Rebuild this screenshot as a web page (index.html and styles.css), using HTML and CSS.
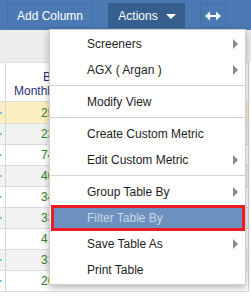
FILE: index.html
```html
<!DOCTYPE html>
<html lang="en">
<head>
    <meta charset="UTF-8">
    <meta name="viewport" content="width=device-width, initial-scale=1.0">
    <title>Screener</title>
    <link rel="stylesheet" href="styles.css">
</head>
<body>
    <div class="toolbar">
        <button class="btn btn-add">Add Column</button>
        <button class="btn btn-actions">Actions <span class="caret"></span></button>
        <button class="btn btn-icon">
            <svg width="16" height="10" viewBox="0 0 16 10">
                <path d="M4 4h8v2H4z" fill="#fff"/>
                <path d="M0 5l5-4.5v9z" fill="#fff"/>
                <path d="M16 5l-5-4.5v9z" fill="#fff"/>
            </svg>
        </button>
    </div>

    <div class="strip"></div>

    <table class="grid">
        <tr class="head">
            <td class="c0"></td>
            <td class="c1"><span class="l1">Be</span><span class="l2">Monthl</span></td>
            <td class="c2"></td>
            <td class="c3"></td>
            <td class="c4"></td>
        </tr>
        <tr class="hover"><td class="c0"><i class="dot"></i></td><td class="c1 up">25</td><td class="c2"></td><td class="c3"></td><td class="c4"></td></tr>
        <tr class="odd"><td class="c0"><i class="dot"></i></td><td class="c1 up">23</td><td class="c2"></td><td class="c3"></td><td class="c4"></td></tr>
        <tr><td class="c0"><i class="dot"></i></td><td class="c1 up">74</td><td class="c2"></td><td class="c3"></td><td class="c4"></td></tr>
        <tr class="odd"><td class="c0"><i class="dot"></i></td><td class="c1 up">40</td><td class="c2"></td><td class="c3"></td><td class="c4"></td></tr>
        <tr><td class="c0"><i class="dot"></i></td><td class="c1 up">34</td><td class="c2"></td><td class="c3"></td><td class="c4"></td></tr>
        <tr class="odd"><td class="c0"><i class="dot"></i></td><td class="c1 up">33</td><td class="c2"></td><td class="c3"></td><td class="c4"></td></tr>
        <tr><td class="c0"></td><td class="c1 up">41</td><td class="c2"></td><td class="c3"></td><td class="c4"></td></tr>
        <tr class="odd"><td class="c0"><i class="dot"></i></td><td class="c1 up">31</td><td class="c2"></td><td class="c3"></td><td class="c4"></td></tr>
        <tr class="last"><td class="c0"><i class="dot"></i></td><td class="c1 up">26.3%</td><td class="c2 down">35.6%</td><td class="c3">16.4%</td><td class="c4"></td></tr>
    </table>

    <ul class="menu">
        <li class="item">Screeners <span class="arrow"></span></li>
        <li class="item">AGX ( Argan ) <span class="arrow"></span></li>
        <li class="divider"></li>
        <li class="item">Modify View</li>
        <li class="divider"></li>
        <li class="item">Create Custom Metric</li>
        <li class="item">Edit Custom Metric <span class="arrow"></span></li>
        <li class="divider"></li>
        <li class="item">Group Table By <span class="arrow"></span></li>
        <li class="item active">Filter Table By</li>
        <li class="item">Save Table As <span class="arrow"></span></li>
        <li class="item">Print Table</li>
    </ul>
</body>
</html>
```

FILE: styles.css
```css
body {
    margin: 0;
    background: #fff;
    font-family: 'Liberation Sans', Arial, sans-serif;
    font-size: 12px;
    width: 251px;
    height: 297px;
    overflow: hidden;
    position: relative;
}

.toolbar {
    background-color: #4a79b3;
    height: 30px;
    display: flex;
    align-items: flex-start;
    padding: 3px 0 0 7px;
    box-sizing: border-box;
    gap: 15px;
}

.btn {
    height: 25px;
    border: 1px solid #4271aa;
    background-color: #4a79b3;
    color: white;
    font-family: 'Liberation Sans', Arial, sans-serif;
    font-size: 12px;
    padding: 0;
    display: flex;
    align-items: center;
    justify-content: center;
}

.btn-add {
    width: 86px;
}

.btn-actions {
    width: 77px;
    background-color: #365f8f;
    border-color: #365f8f;
    gap: 8px;
    padding-left: 1px;
}

.caret {
    width: 0;
    height: 0;
    border-left: 5px solid transparent;
    border-right: 5px solid transparent;
    border-top: 5px solid white;
    margin-top: 2px;
}

.btn-icon {
    width: 26px;
    border-color: #4170a8;
}

.strip {
    height: 32px;
    background-color: #ececec;
}

.grid {
    border-collapse: collapse;
    table-layout: fixed;
    width: 249px;
}

.grid td {
    padding: 0;
    height: 20px;
    border-bottom: 1px solid #dcdcdc;
    white-space: nowrap;
    overflow: hidden;
    line-height: 20px;
}

.grid .c0 {
    width: 5px;
    border-right: 1px solid #d6d6d6;
}

.grid .c1 {
    width: 43px;
    padding-left: 35px;
    box-sizing: border-box;
    text-overflow: clip;
}

.grid .c2 {
    width: 101px;
    padding-left: 66px;
    box-sizing: border-box;
}

.grid .c3 {
    width: 72px;
    padding-left: 37px;
    box-sizing: border-box;
    color: #3a3d6e;
}

.grid .c4 {
    border-right: 1px solid #d6d6d6;
}

.grid .last .c1 {
    overflow: visible;
}

.grid .head td {
    height: 38px;
    vertical-align: top;
    border-top: 1px solid #e0e0e0;
    line-height: 14px;
    color: #2b2f78;
}

.head .c1 {
    padding-left: 0;
    padding-top: 7px;
}

.head .l1 {
    display: block;
    padding-left: 37px;
}

.head .l2 {
    display: block;
    padding-left: 8px;
}

.grid .hover td {
    background-color: #fcf0c2;
    height: 21px;
}

.grid .odd td {
    background-color: #f2f2f2;
}

.up {
    color: #3a7d21;
}

.down {
    color: #cf3b3b;
}

.dot {
    display: block;
    width: 2px;
    height: 2px;
    background-color: #7cc6ee;
}

.menu {
    position: absolute;
    left: 49px;
    top: 29px;
    width: 195px;
    margin: 0;
    padding: 1px 0 1px 0;
    list-style: none;
    background-color: white;
    border: 1px solid #cfcfcf;
    box-shadow: 0 3px 7px rgba(0, 0, 0, 0.28);
}

.item {
    height: 26px;
    line-height: 26px;
    padding: 0 7px 0 37px;
    color: #1e1e1e;
    display: flex;
    align-items: center;
    justify-content: space-between;
}

.arrow {
    width: 0;
    height: 0;
    border-top: 5px solid transparent;
    border-bottom: 5px solid transparent;
    border-left: 5px solid #8a8a8a;
}

.divider {
    height: 1px;
    background-color: #d2d2d2;
    margin: 2px 0 3px 0;
}

.active {
    background-color: #6c91bf;
    color: #c9d6e6;
    border: 3px solid #ec1c24;
    box-sizing: border-box;
    margin-left: 1px;
    padding-left: 33px;
}
```
